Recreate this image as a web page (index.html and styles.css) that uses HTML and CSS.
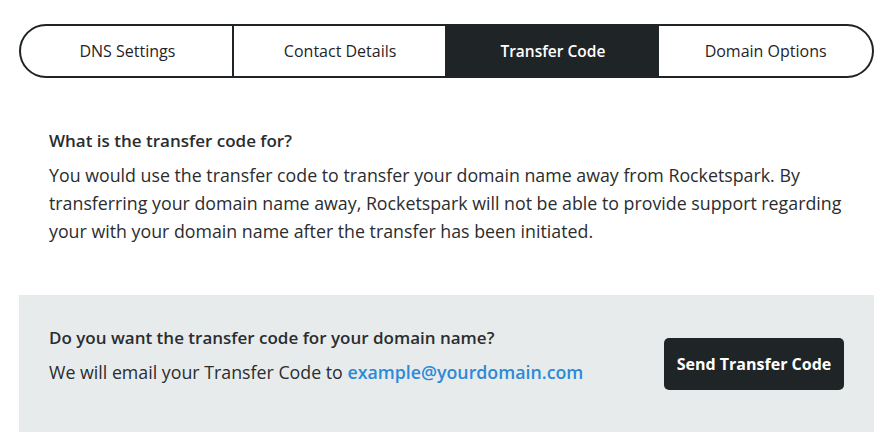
FILE: index.html
```html
<!DOCTYPE html>
<html>
<head>
<meta charset="utf-8">
<link rel="stylesheet" href="styles.css">
</head>
<body>
<div class="page">
  <nav class="tabs">
    <div class="tab">DNS Settings</div>
    <div class="tab">Contact Details</div>
    <div class="tab active">Transfer Code</div>
    <div class="tab">Domain Options</div>
  </nav>
  <section class="info">
    <h3 class="title">What is the transfer code for?</h3>
    <p class="text">You would use the transfer code to transfer your domain name away from Rocketspark. By transferring your domain name away, Rocketspark will not be able to provide support regarding your with your domain name after the transfer has been initiated.</p>
  </section>
  <section class="panel">
    <div class="panel-text">
      <h3 class="title">Do you want the transfer code for your domain name?</h3>
      <p class="text">We will email your Transfer Code to <a class="link" href="#">example@yourdomain.com</a></p>
    </div>
    <button class="btn">Send Transfer Code</button>
  </section>
</div>
</body>
</html>
```

FILE: styles.css
```css
html, body { margin: 0; padding: 0; background: #fff; }
body { font-family: "Open Sans", "Noto Sans", sans-serif; color: #2a2d2f; }
.page { padding: 24px 16px 0 19px; width: 855px; }
.tabs {
  display: grid;
  grid-template-columns: repeat(4, 1fr);
  height: 54px;
  border: 2px solid #1f2427;
  border-radius: 27px;
  overflow: hidden;
  box-sizing: border-box;
}
.tab {
  display: flex; align-items: center; justify-content: center;
  font-size: 16px; color: #1f2427;
  border-left: 2px solid #1f2427;
  margin-left: -2px;
}
.tab:first-child { border-left: none; margin-left: 0; }
.tab.active { background: #1f2427; color: #fff; font-weight: 600; font-size: 15.5px; }
.info { padding: 49px 16px 50px 30px; }
.title { margin: 0 0 6px; font-size: 17px; font-weight: 600; line-height: 28px; }
.text { margin: 0; font-size: 17.8px; line-height: 28px; }
.panel {
  background: #e8ebec;
  height: 137px;
  display: flex; align-items: center; justify-content: space-between;
  padding: 0 30px;
  box-sizing: border-box;
}
.panel-text { padding-bottom: 18px; }
.link { color: #2b8ad8; text-decoration: none; font-weight: 600; }
.btn {
  background: #1f2427; color: #fff; border: none; border-radius: 5px;
  font-family: inherit; font-size: 16px; font-weight: 700;
  width: 180px; height: 52px; padding: 0;
}
```
